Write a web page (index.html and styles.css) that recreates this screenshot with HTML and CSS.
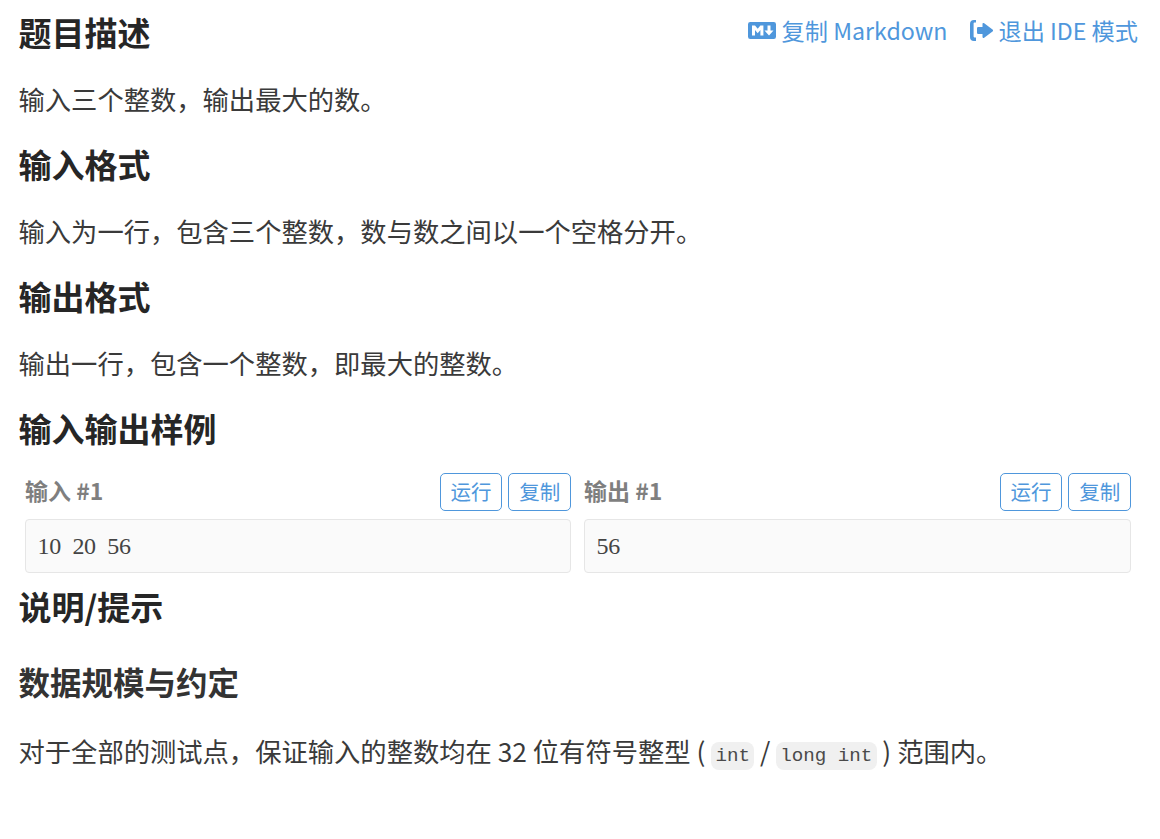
FILE: index.html
```html
<!DOCTYPE html>
<html lang="zh-CN">
<head>
<meta charset="utf-8">
<title>题目描述</title>
<link rel="stylesheet" href="styles.css">
</head>
<body>
<main class="page">
  <div class="actions">
    <a class="action">
      <svg class="icon-md" viewBox="0 0 28 17"><path fill-rule="evenodd" d="M2.200 0h23.600A2.200 2.200 0 0 1 28 2.200v12.600a2.200 2.200 0 0 1-2.200 2.200H2.200A2.200 2.200 0 0 1 0 14.800V2.200A2.200 2.200 0 0 1 2.200 0zM4 13.500h3V8l2.700 3.200L12.400 8v5.500h3v-10h-3L9.700 6.800 7 3.500H4zM19.500 3.500v5h-3l4.500 5 4.500-5h-3v-5z"/></svg>
      <span>复制 Markdown</span>
    </a>
    <a class="action action-exit">
      <svg class="icon-exit" viewBox="0 0 23 21"><path d="M6 0H4A4 4 0 0 0 0 4v13a4 4 0 0 0 4 4h2v-3.600H4.400a.8.8 0 0 1-.8-.8V3.400a.8.800 0 0 1 .8-.8H6z"/><path d="M12.500 4a1 1 0 0 1 1.700-.7l8.300 6.100a1.300 1.300 0 0 1 0 2.200l-8.300 6.100a1 1 0 0 1-1.700-.7V14H8.200A1.200 1.200 0 0 1 7 12.800V8.200A1.200 1.200 0 0 1 8.200 7h4.300z"/></svg>
      <span>退出 IDE 模式</span>
    </a>
  </div>
  <h2>题目描述</h2>
  <p>输入三个整数，输出最大的数。</p>
  <h2>输入格式</h2>
  <p>输入为一行，包含三个整数，数与数之间以一个空格分开。</p>
  <h2>输出格式</h2>
  <p>输出一行，包含一个整数，即最大的整数。</p>
  <h2>输入输出样例</h2>
  <div class="samples">
    <section class="sample">
      <div class="sample-head">
        <span class="sample-title">输入 #1</span>
        <div class="btns"><button class="btn">运行</button><button class="btn">复制</button></div>
      </div>
      <pre class="sample-box">10 20 56</pre>
    </section>
    <section class="sample">
      <div class="sample-head">
        <span class="sample-title">输出 #1</span>
        <div class="btns"><button class="btn">运行</button><button class="btn">复制</button></div>
      </div>
      <pre class="sample-box">56</pre>
    </section>
  </div>
  <h2 class="after-samples">说明/提示</h2>
  <h3>数据规模与约定</h3>
  <p>对于全部的测试点，保证输入的整数均在 32 位有符号整型 ( <code>int</code> / <code>long int</code> ) 范围内。</p>
</main>
</body>
</html>
```
FILE: styles.css
```css
* { box-sizing: border-box; }
html, body { margin: 0; background: #fff; }
body {
  font-family: "Noto Sans CJK SC", "Noto Sans", sans-serif;
  color: #3a3a3a;
  font-size: 26.3px;
  line-height: 42px;
}
.page { position: relative; padding: 11px 22px 40px 18.5px; }
.actions {
  position: absolute;
  top: 11px;
  right: 22px;
  display: flex;
  gap: 23px;
  line-height: 38px;
  font-size: 23.2px;
  color: #4f97dc;
}
.action { display: flex; align-items: center; gap: 6px; }
.action-exit { gap: 5px; }
.action svg { fill: #4f97dc; display: block; }
.icon-md { width: 28px; height: 17px; }
.icon-exit { width: 23px; height: 21px; }
h2 {
  font-size: 33px;
  line-height: 42px;
  font-weight: 700;
  color: #262626;
  margin: 0 0 25px;
}
h3 {
  font-size: 31.5px;
  line-height: 42px;
  font-weight: 700;
  color: #333;
  margin: 0 0 28px;
}
p { margin: 0 0 23px; }
.samples {
  margin: -1px 0 0 6.5px;
  display: grid;
  grid-template-columns: 546px 547px;
  column-gap: 13px;
}
.sample-head {
  display: flex;
  justify-content: space-between;
  align-items: center;
  height: 38px;
  margin-bottom: 8px;
}
.sample-title { font-size: 23px; font-weight: 700; color: #7f7f7f; margin-bottom: 4px; }
.btns { display: flex; gap: 6px; }
.btn {
  width: 62.6px;
  height: 38px;
  padding: 0 0 2px;
  font: 400 20.5px/1 "Noto Sans CJK SC", sans-serif;
  color: #4f97dc;
  background: #fff;
  border: 1px solid #4f97dc;
  border-radius: 5px;
}
.sample-box {
  margin: 0;
  height: 54px;
  padding: 0 11.5px;
  background: #fafafa;
  border: 1px solid #e6e6e6;
  border-radius: 4px;
  font: 400 24px/52px "Liberation Serif", "Noto Sans CJK SC", serif;
  letter-spacing: -0.36px;
  word-spacing: 6px;
  color: #444;
}
.after-samples { margin: 12px 0 33px; }
code {
  font: 400 19.2px/1 "Liberation Mono", monospace;
  background: #f0f0f0;
  color: #4a4a4a;
  padding: 3px 4.5px;
  margin: 0 -0.4px;
  border-radius: 8px;
  position: relative;
  top: -1px;
}
```
